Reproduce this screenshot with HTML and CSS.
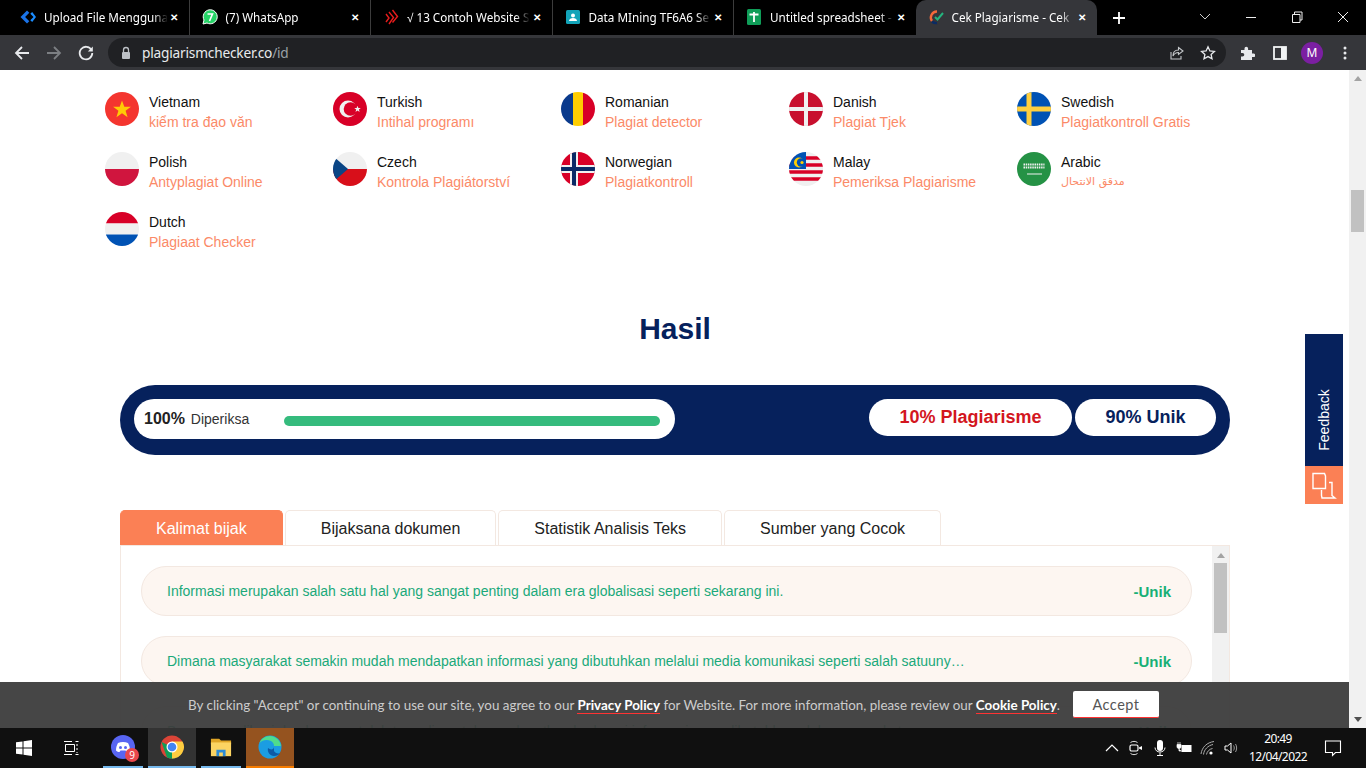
FILE: index.html
```html
<!DOCTYPE html>
<html lang="en">
<head>
  <meta charset="UTF-8" />
  <title>Cek Plagiarisme</title>
  <link rel="stylesheet" href="styles.css">
</head>
<body>
  <div class="tab-bar">
    <div class="tab">
      <svg class="favicon" viewBox="0 0 16 16"><path d="M7 1.500.5 8 7 14.500 9.300 12.200 5.100 8 9.300 3.800z" fill="#1a73e8"/><path d="M10.300 4.800 13.500 8l-3.200 3.200 1.900 1.900L16 8l-3.800-5.100z" fill="#1a8cff"/></svg>
      <span class="tab-title">Upload File Mengguna</span><span class="tab-close">✕</span>
    </div>
    <div class="tab">
      <svg class="favicon" viewBox="0 0 16 16"><path d="M1 15l1-4a7 7 0 1 1 3 3z" fill="#25d366" stroke="#fff" stroke-width="1"/><path d="M5.500 5h5L7.500 12" fill="none" stroke="#fff" stroke-width="1.600"/></svg>
      <span class="tab-title">(7) WhatsApp</span><span class="tab-close">✕</span>
    </div>
    <div class="tab">
      <svg class="favicon" viewBox="0 0 16 16"><path d="M3 5l3 4-3 4M6 3l4.500 5.500L6 15M9.500 1l5 6.500-5 6" fill="none" stroke="#e81c1c" stroke-width="1.400"/></svg>
      <span class="tab-title">√ 13 Contoh Website S</span><span class="tab-close">✕</span>
    </div>
    <div class="tab">
      <svg class="favicon" viewBox="0 0 16 16"><rect x="1" y="1" width="14" height="14" rx="1.500" fill="#12a3b8"/><circle cx="8" cy="6.500" r="2" fill="#fff"/><path d="M4 12c0-4 8-4 8 0z" fill="#fff"/></svg>
      <span class="tab-title">Data MIning TF6A6 Se</span><span class="tab-close">✕</span>
    </div>
    <div class="tab">
      <svg class="favicon" viewBox="0 0 16 16"><rect x="1" y="0" width="14" height="16" rx="1.500" fill="#0f9d58"/><path d="M3.500 5.500h9M8 3v10" stroke="#fff" stroke-width="1.800"/></svg>
      <span class="tab-title">Untitled spreadsheet -</span><span class="tab-close">✕</span>
    </div>
    <div class="tab tab-active">
      <svg class="favicon" viewBox="0 0 16 16"><path d="M9 2.500a6 6 0 0 0-5 9.500" fill="none" stroke="#f4693a" stroke-width="2.400"/><path d="M4 12.500a6 6 0 0 0 5 1.500" fill="none" stroke="#0b2b63" stroke-width="2.400"/><path d="M7 8l2.500 2.500L15 4" fill="none" stroke="#24b47e" stroke-width="2"/></svg>
      <span class="tab-title">Cek Plagiarisme - Cek</span><span class="tab-close">✕</span>
    </div>
    <svg class="new-tab" viewBox="0 0 14 14"><path d="M7 1v12M1 7h12" stroke="#fff" stroke-width="1.800"/></svg>
    <div class="window-controls">
      <svg class="win-btn" viewBox="0 0 46 34"><path d="M18 14l5 5 5-5" fill="none" stroke="#ccc"/></svg>
      <svg class="win-btn" viewBox="0 0 46 34"><path d="M18 17.500h10" stroke="#eee"/></svg>
      <svg class="win-btn" viewBox="0 0 46 34"><path d="M18.500 14.500h7.500v8h-7.500zM20.500 14.500v-2.500h7.500v8h-2" fill="none" stroke="#eee"/></svg>
      <svg class="win-btn" viewBox="0 0 46 34"><path d="M18 12l10 10M28 12 18 22" stroke="#eee"/></svg>
    </div>
  </div>

  <div class="toolbar">
    <svg class="tool-icon" viewBox="0 0 16 16"><path d="M15 8H2M8 2 2 8l6 6" fill="none" stroke="#e8eaed" stroke-width="1.800"/></svg>
    <svg class="tool-icon" viewBox="0 0 16 16"><path d="M1 8h13M8 2l6 6-6 6" fill="none" stroke="#7c7f83" stroke-width="1.800"/></svg>
    <svg class="tool-icon" viewBox="0 0 16 16"><path d="M13.500 5A6.300 6.300 0 1 0 14.300 8" fill="none" stroke="#e8eaed" stroke-width="1.800"/><path d="M14.800 1.500v5h-5z" fill="#e8eaed"/></svg>
    <div class="omnibox">
      <svg class="lock" viewBox="0 0 12 14"><path d="M3.500 6V4a2.500 2.500 0 0 1 5 0v2" fill="none" stroke="#bdc1c6" stroke-width="1.300"/><rect x="2" y="6" width="8" height="7" rx="1" fill="#bdc1c6"/></svg>
      <span class="url">plagiarismchecker.co<span class="url-path">/id</span></span>
      <svg class="omni-icon" viewBox="0 0 16 16"><path d="M9.500 2.500 14 6l-4.500 3.500V7.500C6.500 7.500 5 9 4 11c0-4 2.500-6 5.500-6zM2 7v7h10v-3" fill="none" stroke="#c4c7ca" stroke-width="1.100"/></svg>
      <svg class="omni-icon" viewBox="0 0 16 16"><path d="M8 1.800l1.900 4.100 4.500.5-3.300 3 .9 4.400L8 11.600l-4 2.200.9-4.400-3.300-3 4.500-.5z" fill="none" stroke="#e8eaed" stroke-width="1.300"/></svg>
    </div>
    <svg class="ext-icon" viewBox="0 0 16 16"><path d="M2 5h3.500V3.500a1.800 1.800 0 0 1 3.600 0V5H13v3.500h1.500a1.800 1.800 0 0 1 0 3.600H13V15H2v-3.500h1.500a1.800 1.800 0 0 0 0-3.600H2z" fill="#e8eaed"/></svg>
    <svg class="ext-icon ext-panel" viewBox="0 0 16 16"><rect x="2" y="2" width="12" height="12" fill="none" stroke="#f1f3f4" stroke-width="1.800"/><rect x="9" y="2" width="5" height="12" fill="#f1f3f4"/></svg>
    <span class="avatar">M</span>
    <svg class="ext-icon ext-dots" viewBox="0 0 16 16"><circle cx="8" cy="3" r="1.500" fill="#e8eaed"/><circle cx="8" cy="8" r="1.500" fill="#e8eaed"/><circle cx="8" cy="13" r="1.500" fill="#e8eaed"/></svg>
  </div>

  <div class="viewport">
    <main class="page">
      <section class="lang-grid">
        <a class="lang">
          <svg class="flag" viewBox="0 0 34 34"><rect width="34" height="34" fill="#f4352f"/><path d="M17 8.500l2.300 6.300h6.600l-5.300 4 2 6.400-5.600-3.900-5.600 3.900 2-6.400-5.300-4h6.600z" fill="#ffcb05"/></svg>
          <div class="lang-text"><span class="lang-name">Vietnam</span><span class="lang-link">kiểm tra đạo văn</span></div>
        </a>
        <a class="lang">
          <svg class="flag" viewBox="0 0 34 34"><rect width="34" height="34" fill="#d80027"/><circle cx="15" cy="17" r="8.500" fill="#f0f0f0"/><circle cx="17.500" cy="17" r="6.800" fill="#d80027"/><path d="M24.500 13.800l.9 2.300h2.400l-1.900 1.500.7 2.400-2.100-1.400-2 1.400.7-2.400-1.900-1.500h2.400z" fill="#f0f0f0"/></svg>
          <div class="lang-text"><span class="lang-name">Turkish</span><span class="lang-link">Intihal programı</span></div>
        </a>
        <a class="lang">
          <svg class="flag" viewBox="0 0 34 34"><rect width="12" height="34" fill="#0a3a8c"/><rect x="12" width="10" height="34" fill="#ffce00"/><rect x="22" width="12" height="34" fill="#d80027"/></svg>
          <div class="lang-text"><span class="lang-name">Romanian</span><span class="lang-link">Plagiat detector</span></div>
        </a>
        <a class="lang">
          <svg class="flag" viewBox="0 0 34 34"><rect width="34" height="34" fill="#c8102e"/><path d="M17 0v34M0 17h34" stroke="#f0f0f0" stroke-width="4"/></svg>
          <div class="lang-text"><span class="lang-name">Danish</span><span class="lang-link">Plagiat Tjek</span></div>
        </a>
        <a class="lang">
          <svg class="flag" viewBox="0 0 34 34"><rect width="34" height="34" fill="#0052b4"/><path d="M12 0v34M0 17h34" stroke="#ffcf3f" stroke-width="5"/></svg>
          <div class="lang-text"><span class="lang-name">Swedish</span><span class="lang-link">Plagiatkontroll Gratis</span></div>
        </a>
        <a class="lang">
          <svg class="flag" viewBox="0 0 34 34"><rect width="34" height="17" fill="#f0f0f0"/><rect y="17" width="34" height="17" fill="#d0153e"/></svg>
          <div class="lang-text"><span class="lang-name">Polish</span><span class="lang-link">Antyplagiat Online</span></div>
        </a>
        <a class="lang">
          <svg class="flag" viewBox="0 0 34 34"><rect width="34" height="17" fill="#f0f0f0"/><rect y="17" width="34" height="17" fill="#d80f1a"/><path d="M0 4 15 17 0 30z" fill="#0a4585"/></svg>
          <div class="lang-text"><span class="lang-name">Czech</span><span class="lang-link">Kontrola Plagiátorství</span></div>
        </a>
        <a class="lang">
          <svg class="flag" viewBox="0 0 34 34"><rect width="34" height="34" fill="#d80027"/><path d="M13 0v34M0 17h34" stroke="#f0f0f0" stroke-width="8"/><path d="M13 0v34M0 17h34" stroke="#0a2a66" stroke-width="4"/></svg>
          <div class="lang-text"><span class="lang-name">Norwegian</span><span class="lang-link">Plagiatkontroll</span></div>
        </a>
        <a class="lang">
          <svg class="flag" viewBox="0 0 34 34"><rect width="34" height="34" fill="#f0f0f0"/><path d="M0 6h34M0 13h34M0 20h34M0 27h34" stroke="#d80027" stroke-width="3.500"/><path d="M0 0h17v17H0z" fill="#0052b4"/><circle cx="10" cy="10.500" r="5" fill="#ffce00"/><circle cx="12" cy="10.500" r="4.200" fill="#0052b4"/><circle cx="13" cy="10.500" r="1.600" fill="#ffce00"/></svg>
          <div class="lang-text"><span class="lang-name">Malay</span><span class="lang-link">Pemeriksa Plagiarisme</span></div>
        </a>
        <a class="lang">
          <svg class="flag" viewBox="0 0 34 34"><rect width="34" height="34" fill="#259245"/><path d="M6.500 12.500h21M6.500 15.500h21" stroke="#f0f0f0" stroke-width="2" stroke-dasharray="1.500 .7"/><path d="M10 22h15" stroke="#f0f0f0" stroke-width="1.200"/></svg>
          <div class="lang-text"><span class="lang-name">Arabic</span><span class="lang-link lang-link-ar">مدقق الانتحال</span></div>
        </a>
        <a class="lang">
          <svg class="flag" viewBox="0 0 34 34"><rect width="34" height="11.500" fill="#d80027"/><rect y="11.500" width="34" height="11" fill="#f0f0f0"/><rect y="22.500" width="34" height="11.500" fill="#0052b4"/></svg>
          <div class="lang-text"><span class="lang-name">Dutch</span><span class="lang-link">Plagiaat Checker</span></div>
        </a>
      </section>

      <section class="result">
        <h2 class="result-title">Hasil</h2>
        <div class="summary">
          <div class="progress-pill">
            <span class="progress-label"><b>100%</b> Diperiksa</span>
            <div class="progress-bar"></div>
          </div>
          <div class="score score-plag">10% Plagiarisme</div>
          <div class="score score-unique">90% Unik</div>
        </div>

        <div class="result-tabs">
          <div class="result-tab result-tab-on">Kalimat bijak</div>
          <div class="result-tab">Bijaksana dokumen</div>
          <div class="result-tab">Statistik Analisis Teks</div>
          <div class="result-tab">Sumber yang Cocok</div>
        </div>
        <div class="panel">
          <div class="sentences">
            <div class="sentence"><span>Informasi merupakan salah satu hal yang sangat penting dalam era globalisasi seperti sekarang ini.</span><b>-Unik</b></div>
            <div class="sentence"><span>Dimana masyarakat semakin mudah mendapatkan informasi yang dibutuhkan melalui media komunikasi seperti salah satuuny…</span><b>-Unik</b></div>
            <div class="sentence"><span>Beragam aplikasi dan layanan telah tersedia untuk mendapatkan berbagai informasi yang dibutuhkan oleh masyarakat.</span><b>-Unik</b></div>
          </div>
          <div class="panel-scroll">
            <span class="arrow-up"></span>
            <div class="panel-thumb"></div>
          </div>
        </div>
      </section>

      <div class="cookie-bar">
        <span>By clicking "Accept" or continuing to use our site, you agree to our <a class="cookie-link">Privacy Policy</a> for Website. For more information, please review our <a class="cookie-link">Cookie Policy</a>.</span>
        <button class="cookie-btn">Accept</button>
      </div>

      <div class="feedback">
        <div class="feedback-label"><span>Feedback</span></div>
        <svg class="feedback-icon" viewBox="0 0 38 38"><path d="M8 7.500h11.500l1 2.500v12.500H8zM24 16.500h3v13l3 2.500H17l-.5-2.500V24" fill="none" stroke="#fff" stroke-width="1.400"/></svg>
      </div>
    </main>
    <aside class="scrollbar">
      <span class="arrow-up"></span>
      <div class="scroll-track"><div class="scroll-thumb"></div></div>
      <span class="arrow-down"></span>
    </aside>
  </div>

  <footer class="taskbar">
    <svg class="start" viewBox="0 0 16 16"><path d="M0 2.300 6.500 1.400v6.100H0zM7.500 1.300 16 0v7.500H7.500zM0 8.500h6.500v6.100L0 13.700zM7.500 8.500H16V16l-8.500-1.300z" fill="#fff"/></svg>
    <svg class="taskview" viewBox="0 0 16 16"><path d="M2.500 4.500h9v7h-9zM1 1.500h8M1 14.500h8M12.500 1.500h3M12.500 14.500h3M14 4v2M14 8v2M14 12v1" fill="none" stroke="#fff"/></svg>
    <div class="task-app">
      <span class="app-icon discord-wrap">
        <svg viewBox="0 0 24 24" width="24" height="24"><circle cx="12" cy="12" r="12" fill="#5865f2"/><path d="M7 8c3-1.500 7-1.500 10 0 1.500 2.500 2 5 2 7.500-1 1-2.500 1.500-3.500 1.500l-1-1.500h-5L8.500 17c-1 0-2.500-.5-3.500-1.500C5 13 5.500 10.500 7 8z" fill="#fff"/><circle cx="9.500" cy="12.500" r="1.500" fill="#5865f2"/><circle cx="14.500" cy="12.500" r="1.500" fill="#5865f2"/></svg>
        <span class="discord-badge">9</span>
      </span>
    </div>
    <div class="task-app task-app-hover">
      <svg class="app-icon" viewBox="0 0 24 24"><circle cx="12" cy="12" r="11.500" fill="#db4437"/><path d="M12 12 22.300 17A11.500 11.500 0 0 1 7 22.500L1.500 7z" fill="#0f9d58"/><path d="M12 6.500h10.500A11.500 11.500 0 0 1 12 23.500z" fill="#ffcd40"/><circle cx="12" cy="12" r="5.500" fill="#fff"/><circle cx="12" cy="12" r="4.300" fill="#4285f4"/></svg>
    </div>
    <div class="task-app">
      <svg class="app-icon app-folder" viewBox="0 0 24 24"><path d="M1 3h9l2 2h11v4H1z" fill="#e0a526"/><rect x="1" y="7" width="22" height="15" fill="#fcd462"/><rect x="7" y="15" width="10" height="7" fill="#2d8cd6"/><rect x="10" y="18" width="4" height="4" fill="#fcd462"/></svg>
    </div>
    <div class="task-app task-app-edge">
      <svg class="app-icon" viewBox="0 0 24 24"><circle cx="12" cy="12" r="11.500" fill="#1b9de2"/><path d="M23 12c0-6-5-11-11-11C7 1 3 4 1.500 8 4 5 9 4 13 6c2 1 3 3 3 5h7z" fill="#4fdc8d"/><path d="M16 12c0 3-4 3-6 1-1 4 2 8 6 8 3 0 5-1 6-3-2 1-5 0-6-2z" fill="#0c5aa6"/></svg>
    </div>
    <div class="tray">
      <svg class="tray-icon" viewBox="0 0 16 16"><path d="M2 11l6-6 6 6" fill="none" stroke="#fff" stroke-width="1.200"/></svg>
      <svg class="tray-icon" viewBox="0 0 16 16"><path d="M2.500 2.500c2-1.500 5-1.500 7 0M2.500 13.500c2 1.500 5 1.500 7 0" fill="none" stroke="#ddd"/><rect x="2" y="5" width="8" height="6" rx="1.500" fill="none" stroke="#fff" stroke-width="1.200"/><path d="M11 7.500l3-1.500v4l-3-1.500z" fill="#fff"/></svg>
      <svg class="tray-icon" viewBox="0 0 16 16"><rect x="5" y="0" width="6" height="11" rx="3" fill="#fff"/><path d="M3 7.500c0 6 10 6 10 0M8 12.500V15.500M5 15.500h6" fill="none" stroke="#fff"/></svg>
      <svg class="tray-icon" viewBox="0 0 16 16"><rect x="5.500" y="5" width="10" height="7" fill="#fff"/><path d="M1 4.500h4v3l-2 1.500-2-1.500zM2 2v2.500M4 2v2.500M3 9v2h2.500" fill="#fff" stroke="#fff" stroke-width=".7"/></svg>
      <svg class="tray-icon" viewBox="0 0 16 16"><path d="M1 14C2 7 7 2.500 14 1.500M3.500 14.500C4 9.500 8 5.500 13 4.500M6.500 14.500C7 11.500 9.500 9 12.500 8.500" fill="none" stroke="#aaa"/><circle cx="11" cy="13" r="1.600" fill="#fff"/></svg>
      <svg class="tray-icon" viewBox="0 0 16 16"><path d="M1 6h2.500L7 3v10L3.500 10H1z" fill="none" stroke="#fff"/><path d="M9.500 5.500c1 1.500 1 3.500 0 5M11.500 4c1.500 2.500 1.500 5.500 0 8" fill="none" stroke="#999"/></svg>
      <div class="clock"><span>20:49</span><span>12/04/2022</span></div>
      <svg class="notify" viewBox="0 0 18 18"><path d="M1.500 2h15v11.500h-5L8.500 16.500v-3h-7z" fill="none" stroke="#fff" stroke-width="1.100"/></svg>
    </div>
  </footer>
</body>
</html>
```

FILE: styles.css
```css
* {
  box-sizing: border-box;
}
:root {
  --navy: #06215c;
  --orange: #fb8055;
  --line: #f3e8e1;
}
body {
  margin: 0;
  height: 768px;
  overflow: hidden;
  display: flex;
  flex-direction: column;
  font-family: "Liberation Sans", Arial, sans-serif;
  background: #fff;
}

/* browser tabs */
.tab-bar {
  height: 35px;
  background: #000;
  display: flex;
  align-items: flex-end;
  padding-left: 8px;
  flex-shrink: 0;
}
.tab {
  width: 181.500px;
  height: 35px;
  display: flex;
  align-items: center;
  padding: 0 8px 2px 12px;
  color: #fff;
  font: 11.700px "Noto Sans", sans-serif;
  border-right: 1px solid #3c3c3c;
}
.tab:nth-child(5) {
  border-right: 0;
}
.tab-active {
  background: #35363a;
  border-right: 0;
  border-radius: 10px 10px 0 0;
}
.favicon {
  width: 16px;
  height: 16px;
  flex-shrink: 0;
  margin-right: 8px;
}
.tab-title {
  flex: 1;
  white-space: nowrap;
  -webkit-mask-image: linear-gradient(to right, #000 88%, transparent);
  mask-image: linear-gradient(to right, #000 88%, transparent);
}
.tab-close {
  font-size: 10px;
  font-weight: bold;
  width: 14px;
  text-align: center;
}
.new-tab {
  width: 14px;
  height: 14px;
  margin: 0 0 10px 15px;
}
.window-controls {
  margin-left: auto;
  display: flex;
  align-self: flex-start;
}
.win-btn {
  width: 46px;
  height: 34px;
}

/* address bar */
.toolbar {
  height: 35px;
  background: #35363a;
  display: flex;
  align-items: center;
  flex-shrink: 0;
  padding-left: 14px;
}
.tool-icon {
  width: 16px;
  height: 16px;
  margin-right: 16px;
}
.omnibox {
  width: 1118px;
  height: 29px;
  margin-left: -2px;
  background: #202124;
  border-radius: 15px;
  display: flex;
  align-items: center;
  padding: 0 10px 0 12px;
}
.lock {
  width: 12px;
  height: 14px;
  margin-right: 10px;
}
.url {
  flex: 1;
  color: #e8eaed;
  font: 13.700px "Noto Sans", sans-serif;
  letter-spacing: -0.2px;
}
.url-path {
  color: #9aa0a6;
}
.omni-icon {
  width: 16px;
  height: 16px;
  margin-left: 15px;
}
.ext-icon {
  width: 16px;
  height: 16px;
  margin-left: 13px;
}
.ext-panel {
  margin-left: 17px;
}
.ext-dots {
  margin-left: 14px;
}
.avatar {
  width: 22px;
  height: 22px;
  margin-left: 13px;
  border-radius: 50%;
  background: #7b1fa2;
  color: #fff;
  font: 12px/22px "Noto Sans", sans-serif;
  text-align: center;
}

/* page */
.viewport {
  flex: 1;
  display: flex;
  min-height: 0;
}
.page {
  flex: 1;
  position: relative;
  overflow: hidden;
  background: #fff;
}
.lang-grid {
  display: grid;
  grid-template-columns: repeat(5, 228px);
  grid-auto-rows: 60px;
  padding: 22px 0 0 105px;
}
.lang {
  display: flex;
  gap: 10px;
}
.flag {
  width: 34px;
  height: 34px;
  border-radius: 50%;
  flex-shrink: 0;
}
.lang-text {
  display: flex;
  flex-direction: column;
  font-size: 14px;
  line-height: 20px;
}
.lang-name {
  color: #111;
}
.lang-link {
  color: #fb8a68;
}
.lang-link-ar {
  font-size: 11px;
  font-family: "DejaVu Sans", sans-serif;
}

.result {
  width: 1110px;
  margin-left: 120px;
}
.result-title {
  margin: 37px 0 36px;
  height: 40px;
  line-height: 40px;
  text-align: center;
  font-size: 30px;
  color: var(--navy);
}
.summary {
  height: 70px;
  border-radius: 35px;
  background: var(--navy);
  display: flex;
  align-items: flex-start;
  padding: 14px 14px 0;
}
.progress-pill {
  width: 541px;
  height: 40px;
  border-radius: 20px;
  background: #fff;
  display: flex;
  align-items: center;
  padding: 0 15px 0 10px;
  margin-right: auto;
}
.progress-label {
  width: 140px;
  font-size: 14px;
  color: #333;
}
.progress-label b {
  font-size: 16px;
  color: #222;
  margin-right: 2px;
}
.progress-bar {
  flex: 1;
  height: 10px;
  margin-top: 4px;
  border-radius: 5px;
  background: #35bb7d;
}
.score {
  height: 37px;
  line-height: 37px;
  border-radius: 19px;
  background: #fff;
  text-align: center;
  font-size: 18px;
  font-weight: bold;
}
.score-plag {
  width: 203px;
  margin-right: 3px;
  color: #d3161e;
}
.score-unique {
  width: 141px;
  color: var(--navy);
}

.result-tabs {
  display: flex;
  gap: 2px;
  margin-top: 55px;
  height: 35px;
}
.result-tab {
  padding: 0 35px;
  line-height: 35px;
  font-size: 16px;
  color: #222;
  background: #fff;
  border: 1px solid var(--line);
  border-bottom: 0;
  border-radius: 5px 5px 0 0;
}
.result-tab-on {
  background: var(--orange);
  border-color: var(--orange);
  color: #fff;
}
.panel {
  height: 300px;
  border: 1px solid var(--line);
  display: flex;
}
.sentences {
  flex: 1;
  padding: 20px 20px 0;
}
.sentence {
  height: 50px;
  margin-bottom: 20px;
  border: 1px solid var(--line);
  border-radius: 25px;
  background: #fdf6f1;
  display: flex;
  align-items: center;
  justify-content: space-between;
  padding: 0 20px 0 25px;
  font-size: 14px;
  color: #1aa97a;
}
.sentence b {
  font-size: 15px;
  color: #18b076;
}
.panel-scroll {
  width: 17px;
  background: #f1f1f1;
  display: flex;
  flex-direction: column;
  align-items: center;
  padding-top: 7px;
}
.panel-thumb {
  width: 13px;
  height: 70px;
  margin-top: 5px;
  background: #c1c1c1;
}
.arrow-up {
  border: 4px solid transparent;
  border-top: 0;
  border-bottom: 5px solid #a3a3a3;
}
.arrow-down {
  border: 4px solid transparent;
  border-bottom: 0;
  border-top: 5px solid #505050;
}

.cookie-bar {
  position: absolute;
  left: 0;
  right: 0;
  bottom: 0;
  height: 46px;
  padding-right: 2px;
  background: rgba(60, 60, 60, 0.95);
  display: flex;
  align-items: center;
  justify-content: center;
  gap: 13px;
  color: #ccc;
  font: 13.400px "Lato", sans-serif;
}
.cookie-link {
  color: #fff;
  font-weight: bold;
  border-bottom: 1px solid #f33;
}
.cookie-btn {
  width: 86px;
  height: 27px;
  margin-bottom: 1px;
  border: 0;
  border-bottom: 1px solid #f33;
  border-radius: 2px;
  background: #fff;
  color: #555;
  font: 14.500px "Lato", sans-serif;
  letter-spacing: 0.5px;
}

.feedback {
  position: absolute;
  right: 6px;
  top: 264px;
  width: 38px;
}
.feedback-label {
  height: 132px;
  padding-top: 40px;
  background: var(--navy);
  color: #fff;
  font-size: 14px;
  display: flex;
  justify-content: center;
  align-items: center;
}
.feedback-label span {
  transform: rotate(-90deg);
  display: block;
}
.feedback-icon {
  display: block;
  width: 38px;
  height: 38px;
  background: var(--orange);
}

.scrollbar {
  width: 17px;
  background: #f1f1f1;
  display: flex;
  flex-direction: column;
  align-items: center;
  padding: 6px 0;
}
.scroll-track {
  flex: 1;
  width: 100%;
  padding-top: 109px;
  display: flex;
  justify-content: center;
}
.scroll-thumb {
  width: 13px;
  height: 42px;
  background: #c1c1c1;
}

/* windows taskbar */
.taskbar {
  height: 40px;
  background: #101010;
  display: flex;
  align-items: center;
  flex-shrink: 0;
}
.start {
  width: 16px;
  height: 16px;
  margin-left: 16px;
}
.taskview {
  width: 16px;
  height: 16px;
  margin: 0 24px 0 31px;
}
.task-app {
  width: 40px;
  height: 40px;
  margin-right: 5px;
  display: flex;
  align-items: center;
  justify-content: center;
  border-bottom: 2px solid #76b9ed;
}
.task-app-hover {
  width: 48px;
  background: #333;
}
.task-app-edge {
  width: 48px;
  background: #95531f;
  border-bottom-color: #f57c00;
}
.app-icon {
  width: 24px;
  height: 24px;
}
.app-folder {
  width: 22px;
  height: 22px;
}
.discord-wrap {
  position: relative;
}
.discord-badge {
  position: absolute;
  right: -4px;
  bottom: -3px;
  width: 14px;
  height: 14px;
  border-radius: 50%;
  background: #e8474c;
  color: #fff;
  font: 10px/14px "Noto Sans", sans-serif;
  text-align: center;
}
.tray {
  margin-left: auto;
  display: flex;
  align-items: center;
}
.tray-icon {
  width: 16px;
  height: 16px;
  margin-right: 8px;
}
.clock {
  width: 60px;
  color: #fff;
  font: 12px/18px "Noto Sans", sans-serif;
  text-align: center;
  display: flex;
  flex-direction: column;
  letter-spacing: -0.6px;
}
.notify {
  width: 18px;
  height: 18px;
  margin: 0 24px 0 16px;
}
```
